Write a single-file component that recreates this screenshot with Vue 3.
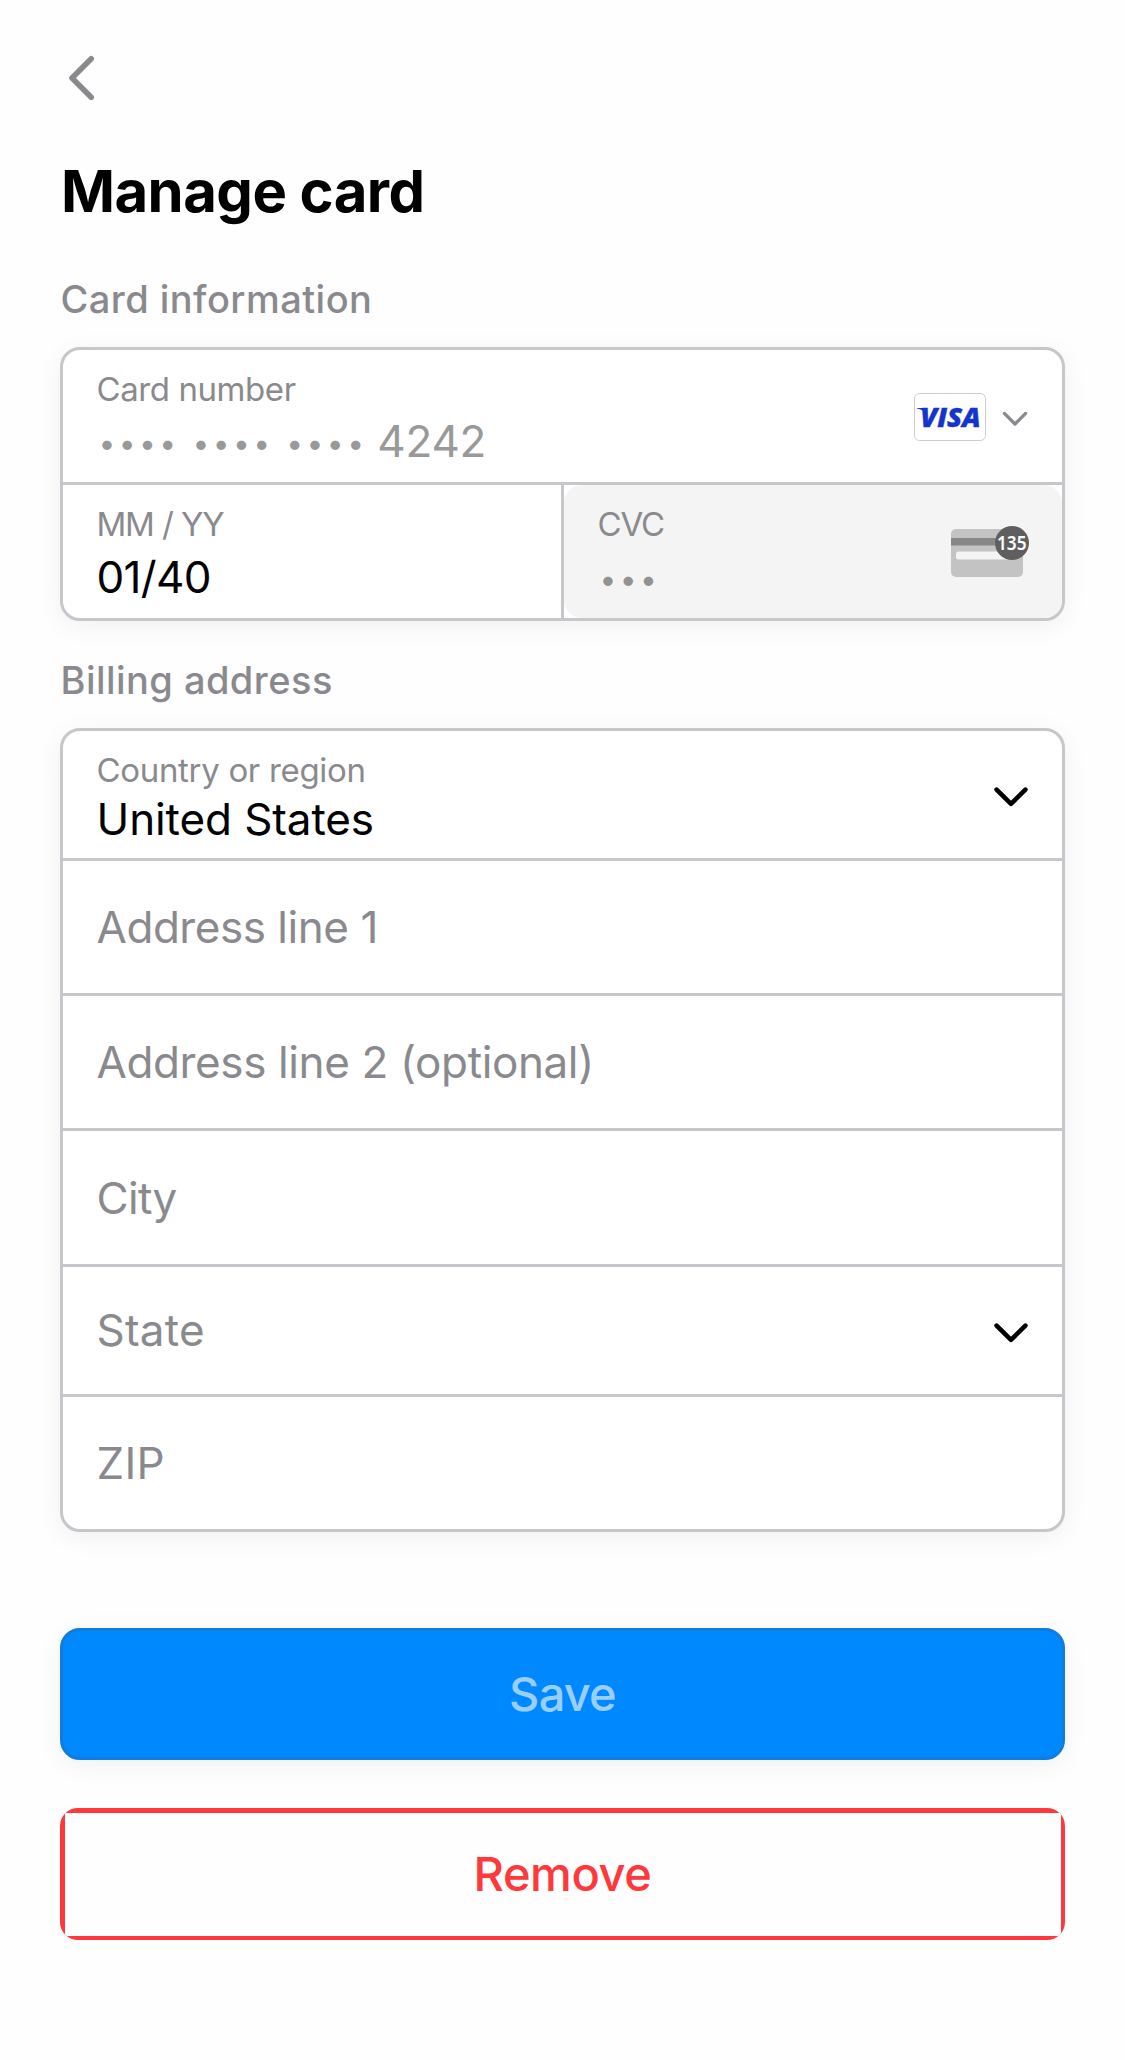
<script setup>
const addressFields = [
  { id: 'line1', label: 'Address line 1', size: 'h132' },
  { id: 'line2', label: 'Address line 2 (optional)', size: 'h132' },
  { id: 'city', label: 'City', size: 'h133' },
  { id: 'state', label: 'State', size: 'h127', select: true },
  { id: 'zip', label: 'ZIP', size: 'h132' },
]
</script>

<template>
  <main class="page">
    <header class="nav">
      <svg class="back" width="30" height="48" viewBox="0 0 30 48" aria-label="Back">
        <path d="M23.2 4.8 4 24l19.2 19.2" />
      </svg>
    </header>

    <h1 class="title">Manage card</h1>

    <h2 class="section">Card information</h2>
    <section class="box">
      <div class="row h132 divided">
        <div class="field">
          <span class="label t-number">Card number</span>
          <span class="value masked">
            <span v-for="n in 3" :key="n" class="dots">••••</span>
            <span class="last4">4242</span>
          </span>
        </div>
        <div class="brand">
          <svg width="72" height="48" viewBox="0 0 72 48">
            <rect x=".5" y=".5" width="71" height="47" rx="5" fill="#fff" stroke="#cdcdd0" />
            <path d="M3 15h7.500l2.200 6.500C10.600 18.200 7 16 3 15.500Z" fill="#1434cb" />
            <text x="6.200" y="34.200" textLength="60.500" lengthAdjust="spacingAndGlyphs" class="visa">VISA</text>
          </svg>
          <svg class="chev-small" width="26" height="16" viewBox="0 0 26 16">
            <path d="M2.400 2.400 13 13 23.600 2.400" />
          </svg>
        </div>
      </div>
      <div class="split">
        <div class="row h133 expiry">
          <div class="field gap9">
            <span class="label t-mmyy">MM / YY</span>
            <span class="value t-date">01/40</span>
          </div>
        </div>
        <div class="row h133 cvc">
          <div class="field gap9">
            <span class="label t-cvc">CVC</span>
            <span class="value masked"><span class="dots">•••</span></span>
          </div>
          <svg class="cvc-icon" width="78" height="51" viewBox="0 0 78 51">
            <rect x="0" y="3" width="72" height="48" rx="5" fill="#c3c3c3" />
            <rect x="0" y="12" width="72" height="7.500" fill="#878787" />
            <rect x="5" y="25.500" width="60" height="8" rx="2.500" fill="#f4f4f4" />
            <circle cx="61" cy="17" r="17" fill="#5f5f5f" />
            <text x="46" y="24" textLength="29.500" lengthAdjust="spacingAndGlyphs" class="digits">135</text>
          </svg>
        </div>
      </div>
    </section>

    <h2 class="section billing">Billing address</h2>
    <section class="box">
      <div class="row h127">
        <div class="field gap5">
          <span class="label t-country">Country or region</span>
          <span class="value t-value">United States</span>
        </div>
        <svg class="chev" width="36" height="24" viewBox="0 0 36 24">
          <path d="M3.600 4.600 18 18.800 32.400 4.600" />
        </svg>
      </div>
      <div v-for="f in addressFields" :key="f.id" class="row ruled" :class="f.size">
        <span class="placeholder" :class="'t-' + f.id">{{ f.label }}</span>
        <svg v-if="f.select" class="chev" width="36" height="24" viewBox="0 0 36 24">
          <path d="M3.600 4.600 18 18.800 32.400 4.600" />
        </svg>
      </div>
    </section>

    <button class="save" type="button">Save</button>
    <div class="remove-frame">
      <button class="remove" type="button">Remove</button>
    </div>
  </main>
</template>

<style>
body {
  background: #fefefe;
}
</style>

<style scoped>
.page {
  box-sizing: border-box;
  width: 1125px;
  height: 2060px;
  padding: 54px 60px 0;
  font-family: Inter, 'Liberation Sans', sans-serif;
  color: #000;
}
.nav {
  height: 107px;
  padding-left: 8px;
}
.back {
  display: block;
}
.back path {
  fill: none;
  stroke: #8a8a8e;
  stroke-width: 5.6;
  stroke-linecap: round;
  stroke-linejoin: round;
}
.title {
  margin: 0 0 58px 1px;
  font-size: 58px;
  line-height: 60px;
  font-weight: 700;
  letter-spacing: -0.55px;
}
.section {
  margin: 0 0 28px;
  padding-left: 0.5px;
  font-size: 38px;
  line-height: 40px;
  font-weight: 500;
  letter-spacing: 0.45px;
  color: #8a8a8e;
}
.section.billing {
  margin-top: 39px;
  letter-spacing: 0.45px;
}
.box {
  border: 3px solid #c6c6cb;
  border-radius: 20px;
  background: #fff;
  box-shadow: 0 5px 26px rgba(0, 0, 0, 0.06);
}
.row {
  display: flex;
  align-items: center;
  justify-content: space-between;
  box-sizing: content-box;
  padding: 0 34px 0 33.5px;
}
.h127 { height: 127px; }
.h132 { height: 132px; }
.h133 { height: 133px; }
.divided { border-bottom: 3px solid #c6c6cb; }
.ruled { border-top: 3px solid #c6c6cb; }
.split {
  display: flex;
}
.expiry {
  width: 430.5px;
  border-right: 3px solid #c6c6cb;
}
.row.cvc {
  flex: 1;
  padding-right: 33px;
  border-radius: 18px;
  background: #f4f4f4;
}
.field {
  display: flex;
  flex-direction: column;
  align-self: flex-start;
  gap: 8px;
  padding-top: 19px;
}
.gap9 { gap: 9px; }
.gap5 { gap: 5px; }
.label {
  font-size: 33px;
  line-height: 40px;
  color: #8a8a8e;
}
.value {
  font-size: 44px;
  line-height: 48px;
}
.placeholder {
  font-size: 44px;
  line-height: 48px;
  color: #8a8a8e;
}
.masked {
  display: flex;
  align-items: center;
  height: 48px;
  padding-left: 2px;
  color: #999;
}
.dots {
  margin: 3px 12.8px 0 0;
  font-size: 30px;
  letter-spacing: 3.4px;
}
.cvc .dots { color: #929292; }
.last4 {
  margin-left: -3px;
  letter-spacing: -0.2px;
}
.t-number { letter-spacing: -0.42px; }
.t-mmyy {
  letter-spacing: -1.3px;
  word-spacing: 0.5px;
}
.t-cvc { letter-spacing: -1.1px; }
.t-country { letter-spacing: -0.32px; }
.t-date { letter-spacing: -0.65px; }
.t-value { letter-spacing: -0.1px; }
.t-line1 { letter-spacing: -0.46px; }
.t-line2 { letter-spacing: -0.38px; }
.t-city { letter-spacing: -0.7px; }
.t-state {
  margin-bottom: 2px;
  letter-spacing: 0.25px;
}
.t-zip { letter-spacing: 0.3px; }
.brand {
  display: flex;
  align-items: center;
  gap: 16px;
  margin-top: 2px;
}
.visa {
  font: italic 800 27px 'Open Sans', sans-serif;
  fill: #1434cb;
  stroke: #1434cb;
  stroke-width: 0.4;
}
.chev-small {
  margin-top: 3px;
}
.chev-small path {
  fill: none;
  stroke: #8a8a8e;
  stroke-width: 3.3;
  stroke-linecap: round;
  stroke-linejoin: round;
}
.cvc-icon {
  display: block;
}
.digits {
  font: 600 19.5px 'Noto Sans', sans-serif;
  fill: #fff;
}
.chev {
  margin: 5px -1px 0 0;
}
.chev path {
  fill: none;
  stroke: #000;
  stroke-width: 4.6;
  stroke-linecap: round;
  stroke-linejoin: round;
}
.save {
  display: block;
  box-sizing: border-box;
  width: 100%;
  height: 132px;
  margin: 96px 0 48px;
  padding: 0 0 2px;
  border: 3px solid #0f7ce0;
  border-radius: 20px;
  background: #0088ff;
  box-shadow: 0 5px 26px rgba(0, 0, 0, 0.06);
  font: 500 47px Inter, sans-serif;
  letter-spacing: -0.8px;
  color: #99cfff;
}
.remove-frame {
  box-sizing: border-box;
  height: 132px;
  padding: 4.5px;
  border-radius: 18px;
  background: #ff383c;
  overflow: hidden;
}
.remove {
  display: block;
  width: 100%;
  height: 100%;
  padding: 0 0 2px;
  border: 0;
  background: #fefefe;
  font: 500 47px Inter, sans-serif;
  letter-spacing: -0.4px;
  color: #ff383c;
}
</style>
